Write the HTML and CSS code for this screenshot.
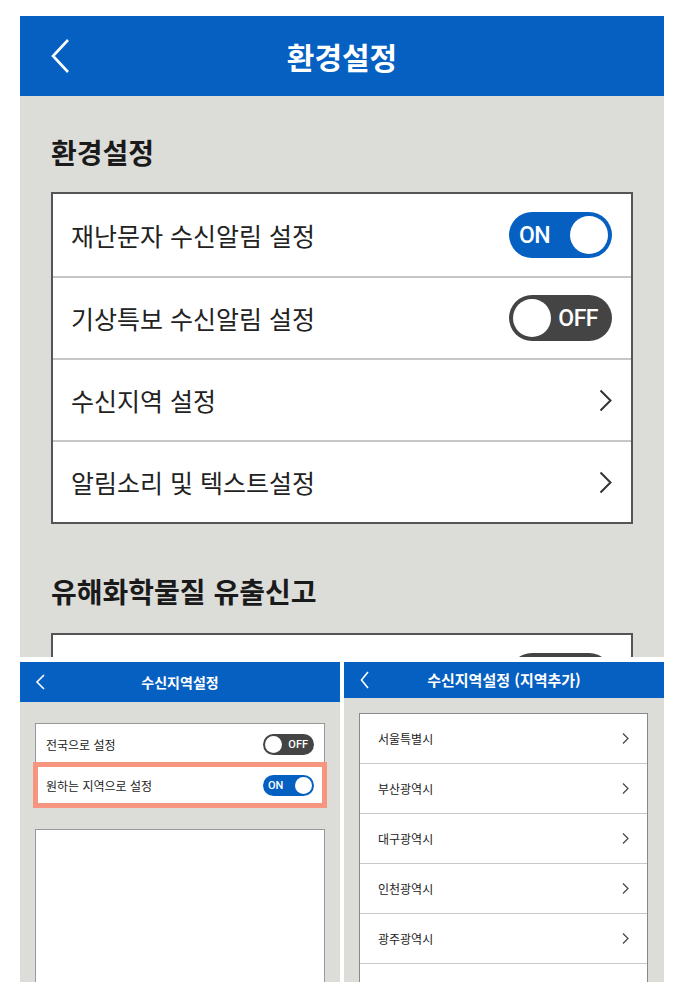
FILE: index.html
```html
<!doctype html>
<html lang="ko">
<head>
    <meta charset="UTF-8">
    <meta name="viewport" content="width=device-width, initial-scale=1.0">
    <title>환경설정</title>
    <link rel="stylesheet" href="styles.css">
</head>
<body>
    <div class="sheet">
        <!-- main settings screen -->
        <section class="screen screen-main">
            <header class="appbar appbar-lg">
                <svg class="back" width="20" height="36" viewBox="0 0 20 36"><path d="M18 2 L3 18 L18 34" fill="none" stroke="#fff" stroke-width="2.6"/></svg>
                <h1>환경설정</h1>
                <span></span>
            </header>
            <div class="screen-body main-body">
                <h2 class="group-title">환경설정</h2>
                <ul class="setting-list">
                    <li>
                        <span>재난문자 수신알림 설정</span>
                        <span class="toggle toggle-on"><b>ON</b><i></i></span>
                    </li>
                    <li>
                        <span>기상특보 수신알림 설정</span>
                        <span class="toggle toggle-off"><i></i><b>OFF</b></span>
                    </li>
                    <li>
                        <span>수신지역 설정</span>
                        <svg class="chev" width="13" height="23" viewBox="0 0 13 23"><path d="M1.5 1.5 L11.5 11.5 L1.5 21.5" fill="none" stroke="#333" stroke-width="2"/></svg>
                    </li>
                    <li>
                        <span>알림소리 및 텍스트설정</span>
                        <svg class="chev" width="13" height="23" viewBox="0 0 13 23"><path d="M1.5 1.5 L11.5 11.5 L1.5 21.5" fill="none" stroke="#333" stroke-width="2"/></svg>
                    </li>
                </ul>
                <h2 class="group-title group-title-2">유해화학물질 유출신고</h2>
                <ul class="setting-list">
                    <li>
                        <span></span>
                        <span class="toggle toggle-off"><i></i></span>
                    </li>
                </ul>
            </div>
        </section>

        <div class="screen-row">
            <!-- region setting -->
            <section class="screen screen-sm">
                <header class="appbar appbar-sm">
                    <svg class="back" width="10" height="16" viewBox="0 0 10 16"><path d="M9 1 L2 8 L9 15" fill="none" stroke="#fff" stroke-width="1.6"/></svg>
                    <h1>수신지역설정</h1>
                    <span></span>
                </header>
                <div class="screen-body region-body">
                    <ul class="mini-list">
                        <li>
                            <span>전국으로 설정</span>
                            <span class="toggle toggle-sm toggle-off"><i></i><b>OFF</b></span>
                        </li>
                        <li class="marked">
                            <span>원하는 지역으로 설정</span>
                            <span class="toggle toggle-sm toggle-on"><b>ON</b><i></i></span>
                        </li>
                    </ul>
                    <div class="empty-box"></div>
                </div>
            </section>

            <!-- region add -->
            <section class="screen screen-sm">
                <header class="appbar appbar-sm appbar-short">
                    <svg class="back" width="9" height="18" viewBox="0 0 9 18"><path d="M8 1 L1.5 9 L8 17" fill="none" stroke="#fff" stroke-width="1.6"/></svg>
                    <h1>수신지역설정 (지역추가)</h1>
                    <span></span>
                </header>
                <div class="screen-body city-body">
                    <ul class="city-list">
                        <li><span>서울특별시</span><svg width="7" height="11" viewBox="0 0 7 11"><path d="M1 0.5 L6 5.5 L1 10.5" fill="none" stroke="#444" stroke-width="1.2"/></svg></li>
                        <li><span>부산광역시</span><svg width="7" height="11" viewBox="0 0 7 11"><path d="M1 0.5 L6 5.5 L1 10.5" fill="none" stroke="#444" stroke-width="1.2"/></svg></li>
                        <li><span>대구광역시</span><svg width="7" height="11" viewBox="0 0 7 11"><path d="M1 0.5 L6 5.5 L1 10.5" fill="none" stroke="#444" stroke-width="1.2"/></svg></li>
                        <li><span>인천광역시</span><svg width="7" height="11" viewBox="0 0 7 11"><path d="M1 0.5 L6 5.5 L1 10.5" fill="none" stroke="#444" stroke-width="1.2"/></svg></li>
                        <li><span>광주광역시</span><svg width="7" height="11" viewBox="0 0 7 11"><path d="M1 0.5 L6 5.5 L1 10.5" fill="none" stroke="#444" stroke-width="1.2"/></svg></li>
                        <li></li>
                    </ul>
                </div>
            </section>
        </div>
    </div>
</body>
</html>
```

FILE: styles.css
```css
body {
    margin: 0;
    background: #fff;
    font-family: "Noto Sans CJK KR", "Noto Sans", sans-serif;
    color: #222;
}

.sheet {
    padding: 16px 20px 0 20px;
    width: 644px;
}

.screen {
    background-color: #dcdcd8;
    overflow: hidden;
    display: flex;
    flex-direction: column;
}

.screen-main {
    height: 641px;
}

.screen-row {
    display: flex;
    gap: 4px;
    margin-top: 5px;
}

.screen-sm {
    width: 320px;
    height: 320px;
}

/* app bars */
.appbar {
    display: grid;
    grid-template-columns: 1fr auto 1fr;
    align-items: center;
    background-color: #0560c2;
    color: #fff;
    flex-shrink: 0;
}

.appbar h1 {
    margin: 0;
    font-weight: 700;
    white-space: nowrap;
}

.appbar .back {
    display: block;
}

.appbar-lg {
    height: 80px;
    padding: 0 30px;
}

.appbar-lg h1 {
    font-size: 30px;
    line-height: 40px;
}

.appbar-sm {
    height: 40px;
    padding: 0 15px;
}

.appbar-sm h1 {
    font-size: 14px;
    line-height: 20px;
}

.appbar-short {
    height: 36px;
    padding: 0 16px;
}

.appbar-short h1 {
    font-size: 15px;
}

/* main screen */
.main-body {
    padding: 36px 31px 0 31px;
}

.group-title {
    margin: 0 0 20px 0;
    font-size: 28px;
    line-height: 40px;
    font-weight: 700;
    color: #1a1a1a;
}

.group-title-2 {
    margin-top: 47px;
    margin-bottom: 22px;
}

.setting-list {
    list-style: none;
    margin: 0;
    padding: 0;
    background: #fff;
    border: 2px solid #555;
}

.setting-list li {
    display: flex;
    align-items: center;
    justify-content: space-between;
    height: 80px;
    padding: 0 19px 0 18px;
    font-size: 25px;
    border-bottom: 2px solid #c6c6c6;
}

.setting-list li:first-child {
    height: 82px;
}

.setting-list li:last-child {
    border-bottom: none;
}

.chev {
    display: block;
}

/* toggles */
.toggle {
    display: flex;
    align-items: center;
    justify-content: space-between;
    box-sizing: border-box;
    width: 103px;
    height: 46px;
    border-radius: 23px;
    font-family: "Roboto", "Noto Sans", sans-serif;
    color: #fff;
}

.toggle b {
    font-weight: 500;
    font-size: 23px;
    letter-spacing: -0.5px;
}

.toggle i {
    width: 38px;
    height: 38px;
    border-radius: 50%;
    background: #fff;
}

.toggle-on {
    background-color: #0560c2;
    padding: 0 4px 0 10px;
}

.toggle-off {
    background-color: #444;
    padding: 0 14px 0 4px;
}

.toggle-sm {
    width: 51px;
    height: 21px;
    border-radius: 11px;
}

.toggle-sm b {
    font-size: 11px;
    letter-spacing: 0;
}

.toggle-sm i {
    width: 17px;
    height: 17px;
}

.toggle-sm.toggle-on {
    padding: 0 2px 0 5px;
}

.toggle-sm.toggle-off {
    padding: 0 6px 0 2px;
}

/* region screen */
.region-body {
    padding: 21px 15px 0 15px;
}

.mini-list {
    list-style: none;
    margin: 0;
    padding: 0;
    background: #fff;
    border: 1px solid #999;
}

.mini-list li {
    display: flex;
    align-items: center;
    justify-content: space-between;
    height: 40px;
    padding: 0 10px;
    font-size: 12px;
    border-bottom: 1px solid #ccc;
}

.mini-list li:last-child {
    border-bottom: none;
}

.mini-list li.marked {
    outline: 5px solid #f69580;
    outline-offset: -2px;
}

.empty-box {
    margin-top: 23px;
    height: 200px;
    background: #fff;
    border: 1px solid #999;
}

/* city list screen */
.city-body {
    padding: 15px 16px 0 15px;
}

.city-list {
    list-style: none;
    margin: 0;
    padding: 0;
    background: #fff;
    border: 1px solid #888;
}

.city-list li {
    display: flex;
    align-items: center;
    justify-content: space-between;
    height: 49px;
    padding: 0 18px;
    font-size: 12px;
    border-bottom: 1px solid #c8c8c8;
}

.city-list svg {
    display: block;
}
```
